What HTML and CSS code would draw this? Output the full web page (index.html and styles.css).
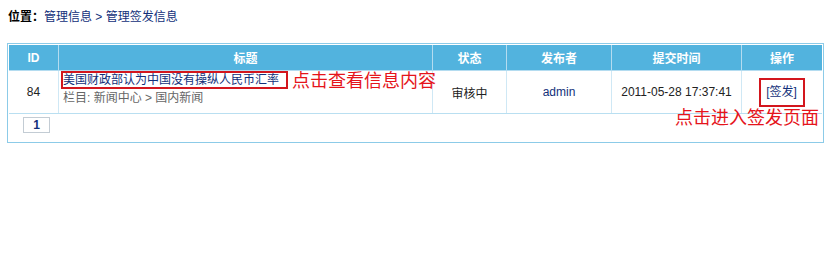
FILE: index.html
```html
<!DOCTYPE html>
<html>
<head>
<meta charset="utf-8">
<title>管理签发信息</title>
<link rel="stylesheet" href="styles.css">
</head>
<body>
    <div class="crumb">
        <b>位置：</b><a href="#">管理信息</a> &gt; <a href="#">管理签发信息</a>
    </div>
    <div class="panel">
        <table class="list">
            <tr class="head">
                <th class="c-id">ID</th>
                <th class="c-title">标题</th>
                <th class="c-state">状态</th>
                <th class="c-user">发布者</th>
                <th class="c-time">提交时间</th>
                <th class="c-op">操作</th>
            </tr>
            <tr class="row">
                <td class="center">84</td>
                <td class="title-cell">
                    <div class="title-line">
                        <a href="#" class="title-link mark">美国财政部认为中国没有操纵人民币汇率</a>
                        <span class="note">点击查看信息内容</span>
                    </div>
                    <div class="category">栏目: 新闻中心 &gt; 国内新闻</div>
                </td>
                <td class="center">审核中</td>
                <td class="center"><a href="#">admin</a></td>
                <td class="center">2011-05-28 17:37:41</td>
                <td class="center op-cell">
                    <a href="#" class="op-link mark">[签发]</a>
                    <span class="note note-op">点击进入签发页面</span>
                </td>
            </tr>
            <tr class="pager">
                <td colspan="6"><span class="page">1</span></td>
            </tr>
        </table>
    </div>
</body>
</html>
```

FILE: styles.css
```css
*{
 font-family:"Liberation Sans","Noto Sans CJK SC",sans-serif;
}
body {
    margin: 0;
    background: #ffffff;
    font-size: 12px;
    color: #222;
}
a {
    color: #12307a;
    text-decoration: none;
}
.crumb {
    padding: 7px 8px 0 8px;
    line-height: 20px;
    height: 20px;
    color: #12307a;
}
.crumb b { color: #000; }
.panel {
    margin: 16px 0 0 7px;
    width: 813px;
    border: 1px solid #8ccbe8;
    padding: 1px;
}
.list {
    width: 100%;
    border-collapse: collapse;
    table-layout: fixed;
    font-size: 12px;
}
.head th {
    background-color: #52b3de;
    color: #fff;
    font-weight: bold;
    height: 25px;
    padding: 0;
    border-left: 1px solid #b4dcf0;
    border-bottom: 1px solid #b4dcf0;
}
.head th:first-child { border-left: none; }
.c-id { width: 49px; }
.c-title { width: 373px; }
.c-state { width: 73px; }
.c-user { width: 104px; }
.c-time { width: 129px; }
.row td {
    height: 42px;
    padding: 0;
    border-left: 1px solid #cfe8f5;
    border-bottom: 1px solid #b9dff1;
    vertical-align: middle;
    white-space: nowrap;
}
.row td:first-child { border-left: none; }
.center { text-align: center; }
.row td.title-cell {
    vertical-align: top;
    padding-left: 2px;
}
.title-line {
    display: flex;
    align-items: flex-start;
    height: 20px;
}
.mark {
    display: inline-block;
    border: 2px solid #d3161d;
}
.title-link {
    line-height: 14px;
    padding: 0 7px 0 0;
}
.note {
    color: #e5141b;
    font-size: 18px;
    line-height: 20px;
    margin-left: 4px;
    white-space: nowrap;
}
.category {
    color: #666;
    line-height: 14px;
    padding-left: 2px;
}
.op-cell { position: relative; }
.op-link {
    padding: 6px 6px 6px 5px;
    line-height: 13px;
}
.note-op {
    position: absolute;
    left: -67px;
    top: 37px;
    margin: 0;
}
.pager td {
    height: 24px;
    padding: 3px 0 0 14px;
    vertical-align: top;
}
.page {
    display: inline-block;
    width: 25px;
    height: 14px;
    line-height: 14px;
    border: 1px solid #c3ccd4;
    text-align: center;
    font-weight: bold;
    color: #12307a;
}
```
